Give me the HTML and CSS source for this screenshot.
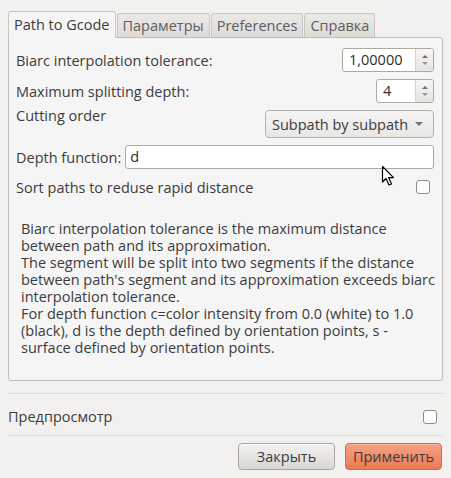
FILE: index.html
```html
<!DOCTYPE html>
<html>
<head>
<meta charset="utf-8">
<link rel="stylesheet" href="styles.css">
</head>
<body>
<div class="dialog">
  <div class="tabs">
    <div class="tab active">Path to Gcode</div>
    <div class="tab">Параметры</div>
    <div class="tab">Preferences</div>
    <div class="tab">Справка</div>
  </div>
  <div class="page">
    <div class="row r1">
      <span class="label">Biarc interpolation tolerance:</span>
      <div class="spin w1"><span class="val">1,00000</span><span class="arrows"><i class="up"></i><i class="down"></i></span></div>
    </div>
    <div class="row r2">
      <span class="label">Maximum splitting depth:</span>
      <div class="spin w2"><span class="val">4</span><span class="arrows"><i class="up"></i><i class="down"></i></span></div>
    </div>
    <div class="row r3">
      <span class="label top">Cutting order</span>
      <div class="combo"><span>Subpath by subpath</span><i class="tri"></i></div>
    </div>
    <div class="row r4">
      <span class="label">Depth function:</span>
      <div class="entry">d</div>
    </div>
    <div class="row r5">
      <span class="label">Sort paths to reduse rapid distance</span>
      <span class="check"></span>
      <svg class="cursor" width="14" height="22" viewBox="0 0 14 22"><path d="M1.5 1.5 L1.5 17 L5 13.5 L8 20 L10.5 19 L7.6 12.6 L12.5 12.6 Z" fill="#fff" stroke="#000" stroke-width="1.2" stroke-linejoin="round"/></svg>
    </div>
    <p class="desc">Biarc interpolation tolerance is the maximum distance between path and its approximation.<br>The segment will be split into two segments if the distance between path's segment and its approximation exceeds biarc interpolation tolerance.<br>For depth function c=color intensity from 0.0 (white) to 1.0 (black), d is the depth defined by orientation points, s - surface defined by orientation points.</p>
  </div>
  <hr class="sep">
  <div class="preview">
    <span class="label">Предпросмотр</span>
    <span class="check"></span>
  </div>
  <hr class="sep">
  <div class="buttons">
    <button class="btn">Закрыть</button>
    <button class="btn primary">Применить</button>
  </div>
</div>
</body>
</html>
```
FILE: styles.css
```css
html, body {
  margin: 0;
  padding: 0;
  background: #f2f1f0;
}
body {
  font-family: "Open Sans", "Noto Sans", sans-serif;
  font-size: 14.5px;
  color: #3c3c3c;
  width: 451px;
  height: 478px;
  overflow: hidden;
}
.dialog {
  padding: 11px 8px 0 8px;
}
.tabs {
  display: flex;
  align-items: flex-end;
  gap: 1px;
  height: 26px;
  position: relative;
  z-index: 1;
}
.tab {
  box-sizing: border-box;
  height: 24px;
  padding: 0 5px;
  border: 1px solid #c9c6c2;
  border-bottom: none;
  border-radius: 3px 3px 0 0;
  background: linear-gradient(#ebe9e6, #dedbd7);
  color: #5d5d5d;
  line-height: 23px;
}
.tab.active {
  height: 27px;
  margin-bottom: -1px;
  background: #f5f5f5;
  color: #3c3c3c;
  line-height: 26px;
  padding: 0 5px;
}
.page {
  box-sizing: border-box;
  height: 344px;
  border: 1px solid #c1bdb8;
  border-radius: 0 3px 3px 3px;
  background: #f5f5f5;
  padding: 10px 8px 0 7px;
}
.row {
  display: flex;
  align-items: center;
  justify-content: space-between;
  position: relative;
}
.r1 { height: 24px; }
.r2 { height: 24px; margin-top: 7px; }
.r3 { height: 28px; margin-top: 7px; align-items: flex-start; }
.r3 .label { margin-top: -4px; }
.r4 { height: 24px; margin-top: 7px; justify-content: flex-start; }
.r5 { height: 20px; margin-top: 8px; }
.spin {
  box-sizing: border-box;
  height: 24px;
  display: flex;
  border: 1px solid #aea9a3;
  border-radius: 3px;
  background: #fff;
}
.w1 { width: 92px; }
.w2 { width: 58px; }
.val {
  flex: 1;
  padding-left: 6px;
  line-height: 22px;
  color: #2e2e2e;
}
.arrows {
  width: 17px;
  border-left: 1px solid #d6d3cf;
  background: linear-gradient(#f7f6f5, #e6e4e1);
  border-radius: 0 2px 2px 0;
  display: flex;
  flex-direction: column;
  align-items: center;
  justify-content: center;
  gap: 4px;
}
.arrows i {
  width: 0; height: 0;
  border-left: 3px solid transparent;
  border-right: 3px solid transparent;
}
.arrows .up { border-bottom: 3px solid #6b6b6b; }
.arrows .down { border-top: 3px solid #9a9a9a; }
.combo {
  box-sizing: border-box;
  width: 169px;
  height: 28px;
  border: 1px solid #b4b0ab;
  border-radius: 4px;
  background: linear-gradient(#f6f5f4, #e9e7e4);
  display: flex;
  align-items: center;
  justify-content: space-between;
  padding: 0 10px 0 6px;
  color: #3c3c3c;
}
.tri {
  width: 0; height: 0;
  border-left: 4px solid transparent;
  border-right: 4px solid transparent;
  border-top: 4px solid #777;
}
.entry {
  box-sizing: border-box;
  flex: 1;
  height: 24px;
  margin-left: 4px;
  border: 1px solid #aea9a3;
  border-radius: 3px;
  background: #fff;
  padding-left: 4px;
  line-height: 22px;
  color: #2e2e2e;
}
.check {
  box-sizing: border-box;
  width: 14px;
  height: 14px;
  border: 1px solid #8f8b86;
  border-radius: 3px;
  background: #fff;
  margin-right: 4px;
}
.cursor {
  position: absolute;
  left: 365px;
  top: -12px;
}
.desc {
  margin: 23px 0 0 5px;
  line-height: 17px;
  width: 414px;
}
.sep {
  margin: 12px 0 0 0;
  border: none;
  border-top: 1px solid #dcdad5;
  height: 0;
}
.preview {
  box-sizing: border-box;
  height: 41px;
  display: flex;
  align-items: center;
  justify-content: space-between;
  padding: 4px 6px 0 0;
}
.preview .check { margin-right: 0; }
.preview + .sep { margin-top: 0; }
.buttons {
  display: flex;
  justify-content: flex-end;
  gap: 10px;
  margin-top: 7px;
  padding-right: 1px;
}
.btn {
  box-sizing: border-box;
  height: 27px;
  width: 97px;
  font: inherit;
  color: #3c3c3c;
  border: 1px solid #a8a5a1;
  border-radius: 4px;
  background: linear-gradient(#f3f2f1, #d9d7d4);
  box-shadow: inset 0 1px 0 #fff;
}
.btn.primary {
  border-color: #cf6f4a;
  background: linear-gradient(#f6a283, #ea7a55);
  box-shadow: inset 0 1px 0 #f9b79e;
  color: #3c3c3c;
}
```
